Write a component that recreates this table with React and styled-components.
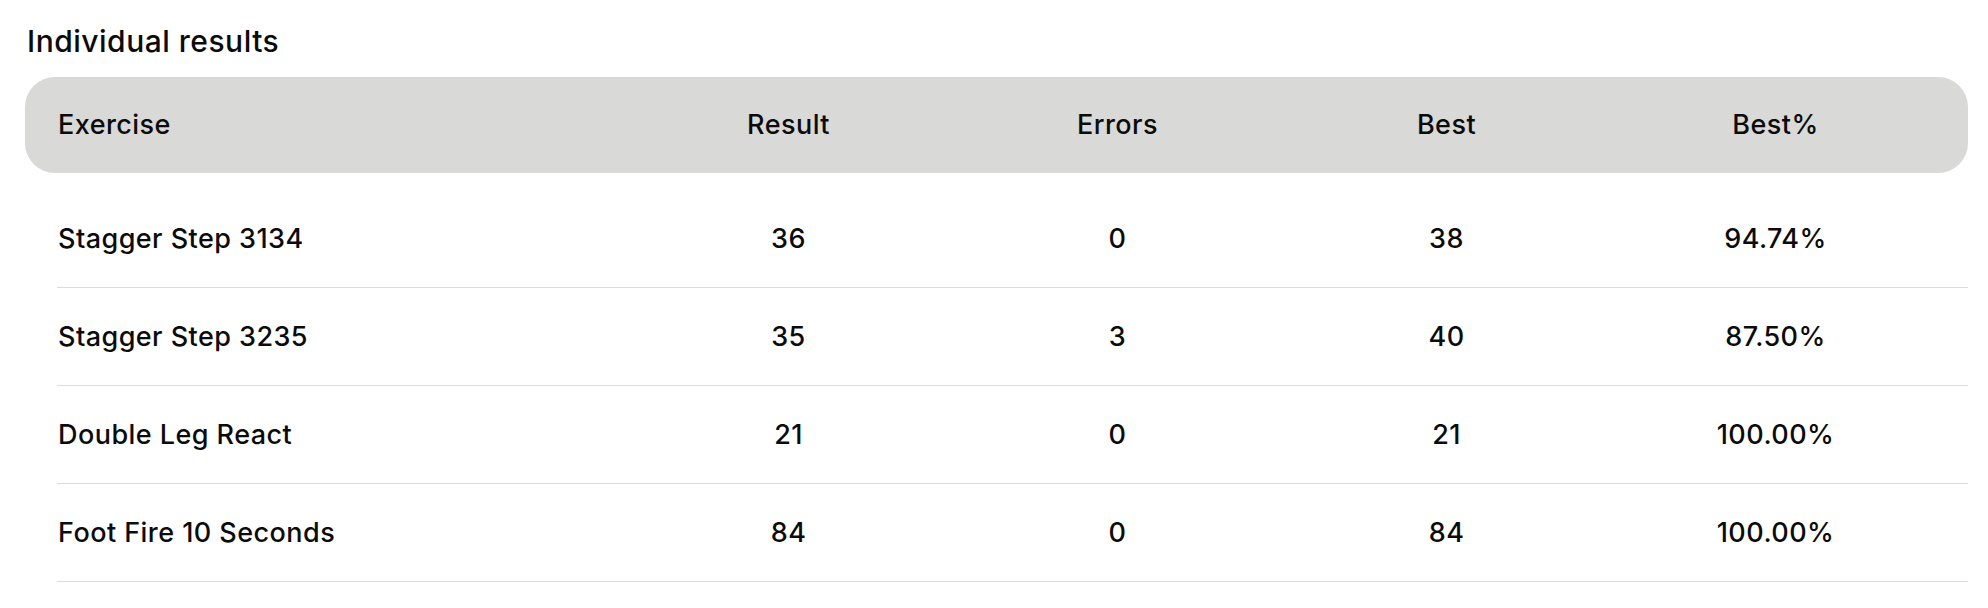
import styled, { createGlobalStyle, css } from 'styled-components';

const GlobalStyle = createGlobalStyle`
  body {
    margin: 0;
    background: #ffffff;
    font-family: Inter, "Liberation Sans", sans-serif;
    color: #0b0b0b;
  }
`;

const results = [
  { name: 'Stagger Step 3134', result: 36, errors: 0, best: 38, pct: '94.74%' },
  { name: 'Stagger Step 3235', result: 35, errors: 3, best: 40, pct: '87.50%' },
  { name: 'Double Leg React', result: 21, errors: 0, best: 21, pct: '100.00%' },
  { name: 'Foot Fire 10 Seconds', result: 84, errors: 0, best: 84, pct: '100.00%' },
];

const App = () => {
  return (
    <>
      <GlobalStyle />
      <Page>
        <Title>Individual results</Title>
        <HeaderRow>
          <Cell>Exercise</Cell>
          <Cell $center>Result</Cell>
          <Cell $center>Errors</Cell>
          <Cell $center>Best</Cell>
          <Cell $center>Best%</Cell>
        </HeaderRow>
        <Body>
          {results.map((r) => (
            <Row key={r.name}>
              <Cell>{r.name}</Cell>
              <Cell $center>{r.result}</Cell>
              <Cell $center>{r.errors}</Cell>
              <Cell $center>{r.best}</Cell>
              <Cell $center>{r.pct}</Cell>
            </Row>
          ))}
        </Body>
      </Page>
    </>
  );
};

export default App;

const Page = styled.div`
  padding: 27px 20px 0 25px;
  display: flex;
  flex-direction: column;
`;

const Title = styled.h2`
  margin: 0 0 21px 2px;
  font-size: 30px;
  line-height: 29px;
  font-weight: 550;
  letter-spacing: 0.5px;
`;

const gridCols = css`
  display: grid;
  grid-template-columns: 1fr repeat(4, 329px);
  align-items: center;
  padding-right: 28px;
`;

const HeaderRow = styled.div`
  ${gridCols};
  height: 96px;
  padding-left: 33px;
  background: #d9d9d8;
  border-radius: 30px;
`;

const Body = styled.div`
  margin: 17px 0 0 32px;
  display: flex;
  flex-direction: column;
`;

const Row = styled.div`
  ${gridCols};
  height: 97px;
  padding-left: 1px;
  border-bottom: 1px solid #dcdcdc;
`;

const Cell = styled.div`
  font-size: 27px;
  line-height: 30px;
  font-weight: 550;
  letter-spacing: 0.45px;
  text-align: ${({ $center }) => ($center ? 'center' : 'left')};
  white-space: nowrap;
`;
